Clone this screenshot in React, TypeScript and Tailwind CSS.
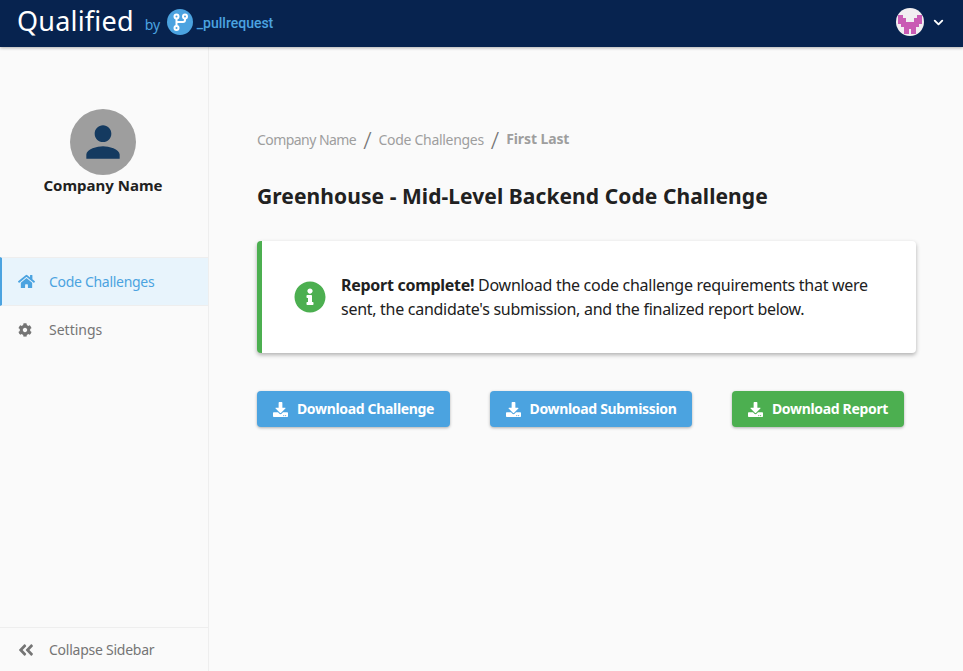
import { FaAngleDoubleLeft, FaCog, FaDownload, FaHome, FaInfoCircle } from "react-icons/fa";
import { MdPerson } from "react-icons/md";
import { FiChevronDown } from "react-icons/fi";

const BUTTONS = [
  { label: "Download Challenge", className: "w-[193px] bg-[#4ba3e0]" },
  { label: "Download Submission", className: "w-[202px] bg-[#4ba3e0]" },
  { label: "Download Report", className: "w-[172px] bg-[#4caf50]" },
];

function BranchLogo() {
  return (
    <svg viewBox="0 0 26 26" className="h-[26px] w-[26px]">
      <circle cx="13" cy="13" r="13" fill="#4ba3e0" />
      <g fill="none" stroke="#fff" strokeWidth="2">
        <circle cx="9.5" cy="7.5" r="2" />
        <circle cx="18" cy="7.5" r="2" />
        <circle cx="9.5" cy="19" r="2" />
        <path d="M9.5 9.5v7.5M18 9.5v1.5a2 2 0 0 1-2 2H9.5" />
      </g>
    </svg>
  );
}

function PixelAvatar() {
  return (
    <svg viewBox="0 0 28 28" className="h-7 w-7 rounded-full bg-[#f1eef1]">
      <path
        d="M2 7H7V10H10V14H18V10H21V7H26V16H23V19H20V26H15V21H13V26H8V19H5V16H2z"
        fill="#c95bb4"
      />
    </svg>
  );
}

function Header() {
  return (
    <header className="relative z-10 flex h-[47px] shrink-0 items-center justify-between bg-[#07234f] pb-[3px] pl-[17px] pr-[17px] shadow-[0_1px_3px_rgba(0,0,0,0.3)]">
      <div className="flex items-center">
        <span className="-mt-[3px] text-[27px] leading-none tracking-[0.2px] text-white">Qualified</span>
        <span className="ml-[11px] mt-[6px] text-sm tracking-[-0.2px] text-[#4ba3e0]">by</span>
        <span className="ml-[7px]">
          <BranchLogo />
        </span>
        <span className="ml-1 mt-[2px] font-['Roboto',sans-serif] text-[14px] font-medium text-[#4ba3e0]">_pullrequest</span>
      </div>
      <div className="flex items-center gap-[7px]">
        <PixelAvatar />
        <FiChevronDown className="text-white" size={15} strokeWidth={3} />
      </div>
    </header>
  );
}

function Sidebar() {
  return (
    <aside className="flex w-[209px] shrink-0 flex-col border-r border-[#eeeeee] bg-[#fafafa]">
      <div className="flex h-[210px] shrink-0 flex-col items-center pr-[2px] pt-[62px]">
        <div className="flex h-[66px] w-[66px] items-center justify-center rounded-full bg-[#9e9e9e]">
          <MdPerson className="text-[#143a60]" size={50} />
        </div>
        <div className="mt-[-2px] text-[15px] font-bold leading-[24px] text-[#212121]">Company Name</div>
      </div>
      <nav className="flex flex-col">
        <div className="flex h-[49px] items-center border-y border-l-2 border-y-[#eeeeee] border-l-[#4ba3e0] bg-[#e8f4fc] pl-[16px] text-sm tracking-[-0.3px] text-[#4ba3e0]">
          <FaHome size={17} className="shrink-0" />
          <span className="ml-[14px]">Code Challenges</span>
        </div>
        <div className="flex h-[48px] items-center pl-[18px] text-sm text-[#757575]">
          <FaCog size={14} className="shrink-0" />
          <span className="ml-[17px]">Settings</span>
        </div>
      </nav>
      <div className="mt-auto flex h-[44px] items-center border-t border-[#eeeeee] pl-[17px] text-sm tracking-[-0.25px] text-[#757575]">
        <FaAngleDoubleLeft size={18} className="shrink-0" />
        <span className="ml-[14px]">Collapse Sidebar</span>
      </div>
    </aside>
  );
}

export default function App() {
  return (
    <div className="flex h-[671px] w-[963px] flex-col overflow-hidden bg-[#fafafa] font-['Noto_Sans',sans-serif]">
      <Header />
      <div className="flex min-h-0 flex-1">
        <Sidebar />
        <main className="flex-1 pl-[48px] pr-[47px] pt-[82px]">
          <div className="flex h-[22px] items-center text-sm text-[#9e9e9e]">
            <span className="tracking-[-0.55px]">Company Name</span>
            <span className="ml-[7px] mr-[7px] text-[24px] font-light leading-none text-[#757575]">/</span>
            <span className="tracking-[-0.3px]">Code Challenges</span>
            <span className="ml-[7px] mr-[7px] text-[24px] font-light leading-none text-[#757575]">/</span>
            <span className="-mt-[2px] font-bold tracking-[-0.1px]">First Last</span>
          </div>
          <h1 className="mt-[30px] text-[21px] font-bold leading-[30px] tracking-[0.07px] text-[#212121]">
            Greenhouse - Mid-Level Backend Code Challenge
          </h1>
          <div className="mt-[30px] flex h-[112px] items-center rounded border-l-[5px] border-[#4caf50] bg-white pl-[32px] pr-[40px] shadow-[0_2px_4px_rgba(0,0,0,0.3)]">
            <FaInfoCircle className="shrink-0 text-[#4caf50]" size={32} />
            <p className="ml-[15px] text-base leading-[24px] tracking-[-0.28px] text-[#212121]">
              <strong>Report complete!</strong> Download the code challenge requirements that were sent, the candidate's
              submission, and the finalized report below.
            </p>
          </div>
          <div className="mt-[38px] flex gap-10">
            {BUTTONS.map((button) => (
              <button
                key={button.label}
                type="button"
                className={`flex h-[36px] items-center justify-center gap-[9px] rounded text-sm font-bold tracking-[-0.33px] text-white shadow-[0_1px_3px_rgba(0,0,0,0.3)] ${button.className}`}
              >
                <FaDownload size={15} />
                {button.label}
              </button>
            ))}
          </div>
        </main>
      </div>
    </div>
  );
}
